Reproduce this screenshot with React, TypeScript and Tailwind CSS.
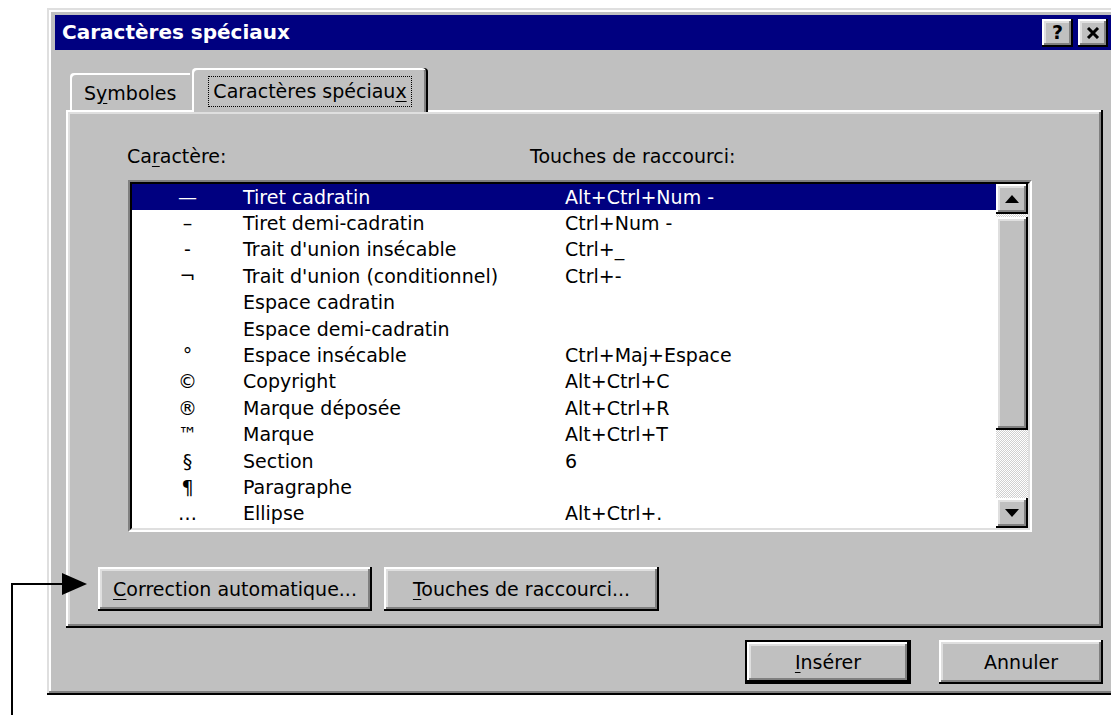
import React from "react";

// raised 3D edge used by push buttons, scroll arrows and the thumb
const raised =
  "shadow-[inset_-2px_-2px_#000,inset_2px_2px_#fff,inset_-4px_-4px_#808080,inset_4px_4px_#dfdfdf]";

const rows: [string, string, string][] = [
  ["—", "Tiret cadratin", "Alt+Ctrl+Num -"],
  ["–", "Tiret demi-cadratin", "Ctrl+Num -"],
  ["-", "Trait d'union insécable", "Ctrl+_"],
  ["¬", "Trait d'union (conditionnel)", "Ctrl+-"],
  ["", "Espace cadratin", ""],
  ["", "Espace demi-cadratin", ""],
  ["°", "Espace insécable", "Ctrl+Maj+Espace"],
  ["©", "Copyright", "Alt+Ctrl+C"],
  ["®", "Marque déposée", "Alt+Ctrl+R"],
  ["™", "Marque", "Alt+Ctrl+T"],
  ["§", "Section", "6"],
  ["¶", "Paragraphe", ""],
  ["…", "Ellipse", "Alt+Ctrl+."],
];

function Arrow({ up }: { up?: boolean }) {
  return (
    <svg width="14" height="8" viewBox="0 0 14 8">
      <polygon points={up ? "7,0 14,8 0,8" : "0,0 14,0 7,8"} fill="#000" />
    </svg>
  );
}

function ScrollBar() {
  return (
    <div className="flex w-[32px] flex-col">
      <div className={`flex h-[30px] items-center justify-center bg-[#c0c0c0] ${raised}`}>
        <Arrow up />
      </div>
      <div className="h-[3px] bg-[image:repeating-conic-gradient(#d0d0d0_0_25%,#fff_0_50%)] bg-[length:2px_2px]" />
      <div className={`h-[213px] bg-[#c0c0c0] ${raised}`} />
      <div className="h-[68px] bg-[image:repeating-conic-gradient(#d0d0d0_0_25%,#fff_0_50%)] bg-[length:2px_2px]" />
      <div className={`flex h-[30px] items-center justify-center bg-[#c0c0c0] ${raised}`}>
        <Arrow />
      </div>
    </div>
  );
}

function CharList() {
  return (
    <div className="ml-[62px] mt-[12px] h-[352px] w-[904px] border-2 border-t-[#808080] border-l-[#808080] border-b-white border-r-white">
      <div className="flex h-full border-2 border-t-black border-l-black border-b-[#dfdfdf] border-r-[#dfdfdf] bg-white">
        <div className="flex-1">
          {rows.map(([sym, name, keys], i) => (
            <div
              key={name}
              className={`flex h-[26.4px] items-center ${
                i === 0 ? "bg-[#000080] text-white" : "text-black"
              }`}
            >
              <span className="w-[111px] text-center">{sym}</span>
              <span className="w-[322px]">{name}</span>
              <span>{keys}</span>
            </div>
          ))}
        </div>
        <ScrollBar />
      </div>
    </div>
  );
}

function Button({
  children,
  width,
  isDefault,
}: {
  children: React.ReactNode;
  width: string;
  isDefault?: boolean;
}) {
  return (
    <div
      className={`flex h-[44px] items-center justify-center bg-[#c0c0c0] ${raised} ${width} ${
        isDefault ? "border-2 border-black" : ""
      }`}
    >
      {children}
    </div>
  );
}

export default function App() {
  return (
    <div className="relative h-[715px] w-[1111px] overflow-hidden bg-white font-['DejaVu_Sans',sans-serif] text-[19px] leading-[23px] text-black">
      {/* dialog window, runs past the right edge */}
      <div className="ml-[47px] mt-[8px] flex h-[687px] w-[1080px] flex-col bg-[#c0c0c0] px-[8px] pt-[7px] shadow-[inset_-2px_-2px_#000,inset_2px_2px_#dfdfdf,inset_-4px_-4px_#808080,inset_4px_4px_#fff]">
        {/* title bar */}
        <div className="flex h-[35px] items-center justify-between bg-[#000080] pl-[7px] pr-[11px]">
          <span className="text-[20px] font-bold text-white">Caractères spéciaux</span>
          <div className="flex gap-[5px]">
            <div className={`flex h-[28px] w-[31px] items-center justify-center bg-[#c0c0c0] text-[19px] font-bold ${raised}`}>
              ?
            </div>
            <div className={`flex h-[28px] w-[30px] items-center justify-center bg-[#c0c0c0] ${raised}`}>
              <svg width="14" height="12" viewBox="0 0 14 12">
                <path d="M2 1 L12 11 M12 1 L2 11" stroke="#000" strokeWidth="3" />
              </svg>
            </div>
          </div>
        </div>

        <div className="ml-[11px] mt-[18px] flex flex-col">
          {/* tabs */}
          <div className="-mb-[2px] flex items-end">
            <div className="mb-[2px] ml-[4px] flex h-[37px] w-[120px] items-center rounded-tl-[4px] pl-[14px] pt-[3px] shadow-[inset_2px_2px_#fff]">
              S<u className="underline-offset-[3px]">y</u>mboles
            </div>
            <div className="relative z-10 ml-[2px] flex h-[44px] w-[236px] justify-center rounded-t-[4px] bg-[#c0c0c0] pt-[8px] shadow-[inset_-2px_0_#000,inset_2px_2px_#fff,inset_-4px_0_#808080]">
              <span className="flex h-[31px] items-center border border-dotted border-black px-[4px]">
                Caractères spéciau<u className="underline-offset-[3px]">x</u>
              </span>
            </div>
          </div>

          {/* tab page */}
          <div className="flex h-[518px] w-[1037px] flex-col shadow-[inset_-2px_-2px_#000,inset_2px_2px_#fff,inset_-4px_-4px_#808080,inset_4px_4px_#dfdfdf]">
            <div className="ml-[61px] mt-[35px] flex">
              <span className="w-[403px]">
                Ca<u className="underline-offset-[3px]">r</u>actère:
              </span>
              <span>Touches de raccourci:</span>
            </div>
            <CharList />
            <div className="ml-[32px] mt-[35px] flex gap-[12px]">
              <Button width="w-[274px]">
                <span>
                  <u className="underline-offset-[3px]">C</u>orrection automatique...
                </span>
              </Button>
              <Button width="w-[275px]">
                <span>
                  <u className="underline-offset-[3px]">T</u>ouches de raccourci...
                </span>
              </Button>
            </div>
          </div>

          {/* dialog buttons */}
          <div className="mt-[12px] flex w-[1037px] justify-end gap-[28px]">
            <Button width="w-[166px]" isDefault>
              <span>
                <u className="underline-offset-[3px]">I</u>nsérer
              </span>
            </Button>
            <Button width="w-[164px]">Annuler</Button>
          </div>
        </div>
      </div>

      {/* callout arrow pointing at the first button */}
      <svg className="absolute left-0 top-[560px]" width="100" height="155" viewBox="0 0 100 155">
        <path d="M12 155 L12 24 L64 24" fill="none" stroke="#000" strokeWidth="2" />
        <polygon points="62,13 87,24 62,35" fill="#000" />
      </svg>
    </div>
  );
}
